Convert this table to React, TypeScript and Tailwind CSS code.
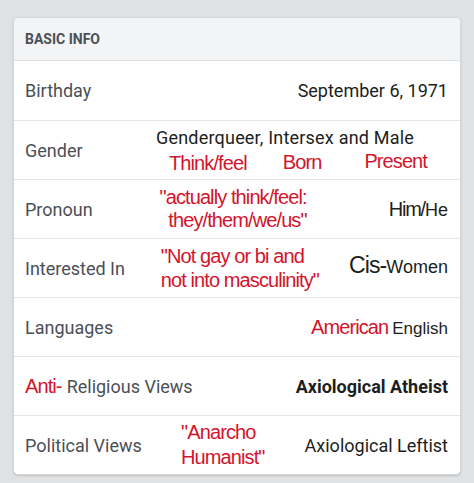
import React from "react";

// annotation font: Arial-ish squeezed to look condensed
const narrow = "font-['Liberation_Sans',sans-serif] tracking-[-0.9px]";
const red = `text-[#d3142b] ${narrow}`;

function Row({ children, first }: { children: React.ReactNode; first?: boolean }) {
	return (
		<div
			className={`h-[59px] flex items-center pl-[11px] pr-[12px] ${
				first ? "" : "border-t border-[#e3e5e7]"
			}`}
		>
			{children}
		</div>
	);
}

function Label({ children }: { children: React.ReactNode }) {
	return <span className="text-[18px] text-[#4b4f56]">{children}</span>;
}

export default function App() {
	return (
		<div className="w-[474px] h-[483px] bg-[#dfe1e2] pt-[17px] px-[13px] font-['Roboto',sans-serif]">
			<div className="bg-white rounded-[5px] border border-[#d4d6d8] shadow-[0_1px_2px_rgba(0,0,0,0.15)] overflow-hidden">
				{/* header */}
				<div className="h-[43px] bg-[#f2f4f5] border-b border-[#dcdfe1] flex items-center pl-[11px]">
					<span className="text-[14px] font-bold text-[#4b4f56]">BASIC INFO</span>
				</div>

				<Row first>
					<Label>Birthday</Label>
					<span className="ml-auto text-[18px] text-[#1d1e20]">September 6, 1971</span>
				</Row>

				<Row>
					<Label>Gender</Label>
					<div className="ml-auto mr-[34px] w-[258px] flex flex-col">
						<span className="text-[18px] tracking-[0.2px] leading-[24px] text-[#1d1e20] whitespace-nowrap">
							Genderqueer, Intersex and Male
						</span>
						<div className={`flex leading-[24px] text-[20px] whitespace-nowrap ${red}`}>
							<span className="ml-[13px] mt-[1px]">Think/feel</span>
							<span className="ml-[36px]">Born</span>
							<span className="ml-[43px] -mt-[1px]">Present</span>
						</div>
					</div>
				</Row>

				<Row>
					<Label>Pronoun</Label>
					<div className={`ml-auto mr-[82px] text-right text-[20px] leading-[23px] ${red}`}>
						<div>"actually think/feel:</div>
						<div>they/them/we/us"</div>
					</div>
					<span className="text-[#1d1e20] whitespace-nowrap font-['Liberation_Sans',sans-serif]">
						<span className="text-[20px] tracking-[-1.2px]">Him/</span>
						<span className="text-[18px]">He</span>
					</span>
				</Row>

				<Row>
					<Label>Interested In</Label>
					<div className={`ml-auto mr-[30px] text-left text-[20px] leading-[24px] tracking-[-0.8px] ${red}`}>
						<div>"Not gay or bi and</div>
						<div>not into masculinity"</div>
					</div>
					<span className="text-[#1d1e20] whitespace-nowrap -mt-[6px]">
						<span className={`text-[23px] ${narrow}`}>Cis-</span>
						<span className="font-['Liberation_Sans',sans-serif] text-[18px]">Women</span>
					</span>
				</Row>

				<Row>
					<Label>Languages</Label>
					<span className="ml-auto whitespace-nowrap">
						<span className={`text-[20px] ${red}`}>American</span>{" "}
						<span className="text-[17px] text-[#1d1e20] font-['Liberation_Sans',sans-serif]">English</span>
					</span>
				</Row>

				<Row>
					<span className="whitespace-nowrap">
						<span className={`text-[20px] ${red}`}>Anti-</span>
						<span className="ml-[5px]">
							<Label>Religious Views</Label>
						</span>
					</span>
					<span className="ml-auto text-[18px] font-bold text-[#1d1e20]">Axiological Atheist</span>
				</Row>

				<Row>
					<Label>Political Views</Label>
					<div className={`ml-auto mr-[40px] text-[20px] leading-[25px] ${red}`}>
						<div>"Anarcho</div>
						<div>Humanist"</div>
					</div>
					<span className="text-[18px] text-[#1d1e20]">Axiological Leftist</span>
				</Row>
			</div>
		</div>
	);
}
